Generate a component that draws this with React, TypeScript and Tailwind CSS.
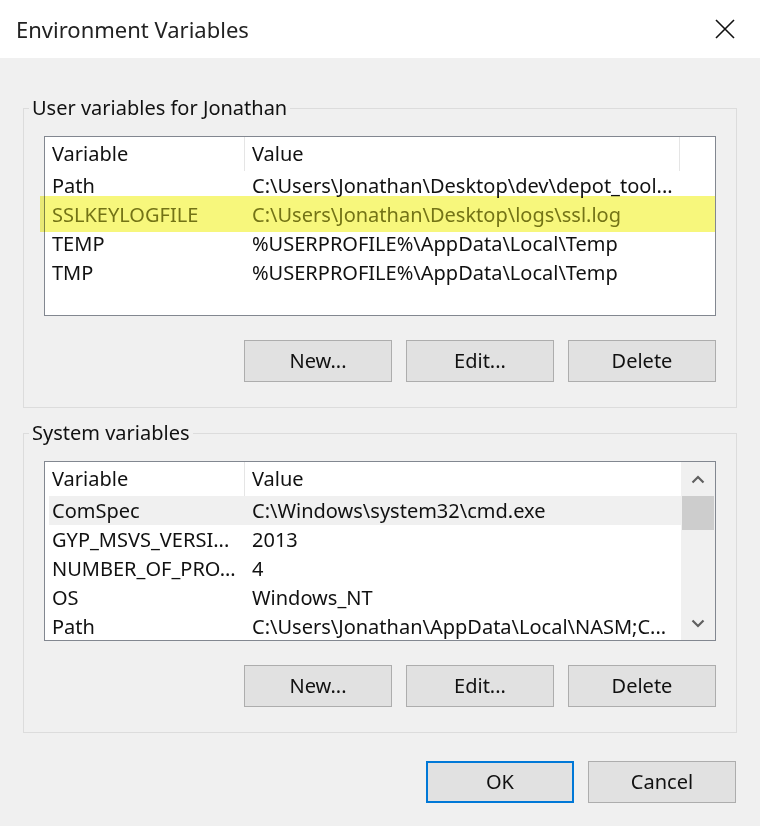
const userVars = [
  { name: 'Path', value: 'C:\\Users\\Jonathan\\Desktop\\dev\\depot_tool...' },
  { name: 'SSLKEYLOGFILE', value: 'C:\\Users\\Jonathan\\Desktop\\logs\\ssl.log', marked: true },
  { name: 'TEMP', value: '%USERPROFILE%\\AppData\\Local\\Temp' },
  { name: 'TMP', value: '%USERPROFILE%\\AppData\\Local\\Temp' },
];

const systemVars = [
  { name: 'ComSpec', value: 'C:\\Windows\\system32\\cmd.exe', selected: true },
  { name: 'GYP_MSVS_VERSI...', value: '2013' },
  { name: 'NUMBER_OF_PRO...', value: '4' },
  { name: 'OS', value: 'Windows_NT' },
  { name: 'Path', value: 'C:\\Users\\Jonathan\\AppData\\Local\\NASM;C...' },
];

type Row = { name: string; value: string; marked?: boolean; selected?: boolean };

function VarRow({ row }: { row: Row }) {
  return (
    <div
      className={`ml-[4px] flex h-[29px] shrink-0 items-center whitespace-nowrap ${
        row.selected ? 'bg-[#f0f0f0]' : ''
      } ${row.marked ? 'text-[#77772c]' : 'text-[#111]'}`}
    >
      <div className="w-[196px] overflow-hidden pl-[3px]">{row.name}</div>
      <div className="flex-1 overflow-hidden pl-[7px]">{row.value}</div>
    </div>
  );
}

function Header({ wide }: { wide?: boolean }) {
  return (
    <div className="flex h-[34px] shrink-0 text-[#111]">
      <div className="flex w-[200px] items-center border-r border-[#e5e5e5] pl-[7px]">Variable</div>
      <div className={`flex items-center pl-[7px] ${wide ? 'w-[435px] border-r border-[#e5e5e5]' : 'flex-1'}`}>
        Value
      </div>
    </div>
  );
}

function Chevron({ up }: { up?: boolean }) {
  return (
    <svg width="14" height="9" viewBox="0 0 14 9">
      <path
        d={up ? 'M1.5 7.5 L7 2 L12.5 7.5' : 'M1.5 1.5 L7 7 L12.5 1.5'}
        fill="none"
        stroke="#606060"
        strokeWidth="2.2"
      />
    </svg>
  );
}

function Buttons() {
  return (
    <div className="mt-[24px] flex justify-end gap-[14px]">
      {['New...', 'Edit...', 'Delete'].map((b) => (
        <button
          key={b}
          className="h-[42px] w-[148px] border border-[#adadad] bg-[#e1e1e1] text-[#111]"
        >
          {b}
        </button>
      ))}
    </div>
  );
}

export default function App() {
  return (
    <div className="flex h-[826px] w-[760px] flex-col overflow-hidden bg-[#f0f0f0] font-['Noto_Sans',sans-serif] text-[20px]">
      {/* title bar */}
      <div className="flex h-[58px] shrink-0 items-center justify-between bg-white pl-[16px] pr-[25px]">
        <span className="text-[22px] text-[#222]">Environment Variables</span>
        <svg width="20" height="20" viewBox="0 0 20 20">
          <path d="M1 1 L19 19 M19 1 L1 19" stroke="#111" strokeWidth="1.6" />
        </svg>
      </div>

      {/* user variables */}
      <fieldset className="mx-[23px] mt-[38px] border border-[#dcdcdc]">
        <legend className="ml-[5px] px-[3px] text-[20px] leading-[24px] text-[#111]">
          User variables for Jonathan
        </legend>
        <div className="px-[20px] pt-[16px] pb-[25px]">
          <div className="relative">
            <div className="flex h-[180px] flex-col border border-[#828790] bg-white">
              <Header wide />
              {userVars.map((r) => (
                <VarRow key={r.name} row={r} />
              ))}
            </div>
            <div className="absolute top-[60px] left-[-4px] h-[36px] w-[675px] bg-[#f7f77c] mix-blend-multiply" />
          </div>
          <Buttons />
        </div>
      </fieldset>

      {/* system variables */}
      <fieldset className="mx-[23px] mt-[13px] border border-[#dcdcdc]">
        <legend className="ml-[5px] px-[3px] text-[20px] leading-[24px] text-[#111]">
          System variables
        </legend>
        <div className="px-[20px] pt-[16px] pb-[25px]">
          <div className="flex h-[180px] border border-[#828790] bg-white">
            <div className="flex min-w-0 flex-1 flex-col overflow-hidden">
              <Header />
              {systemVars.map((r) => (
                <VarRow key={r.name + r.value} row={r} />
              ))}
            </div>
            <div className="flex w-[34px] flex-col bg-[#f0f0f0]">
              <div className="flex h-[34px] items-center justify-center">
                <Chevron up />
              </div>
              <div className="mx-[1px] h-[34px] bg-[#cdcdcd]" />
              <div className="flex-1" />
              <div className="flex h-[34px] items-center justify-center">
                <Chevron />
              </div>
            </div>
          </div>
          <Buttons />
        </div>
      </fieldset>

      {/* dialog buttons */}
      <div className="mt-[28px] flex justify-end gap-[14px] pr-[24px]">
        <button className="h-[42px] w-[148px] border-2 border-[#0078d7] bg-[#e1e1e1] text-[#111]">OK</button>
        <button className="h-[42px] w-[148px] border border-[#adadad] bg-[#e1e1e1] text-[#111]">Cancel</button>
      </div>
    </div>
  );
}
